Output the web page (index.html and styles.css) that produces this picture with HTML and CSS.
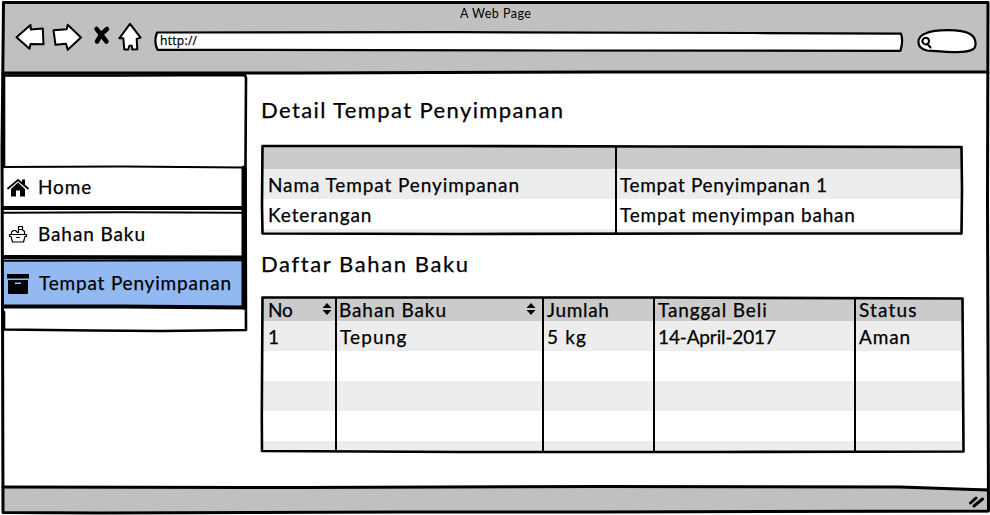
FILE: index.html
```html
<!DOCTYPE html>
<html lang="id">
<head>
<meta charset="utf-8">
<title>A Web Page</title>
<link rel="stylesheet" href="styles.css">
</head>
<body>
<div class="window">
  <header class="chrome">
    <div class="title">A Web Page</div>
    <div class="toolbar">
      <svg class="icon back" viewBox="0 0 28 26"><path d="M.5 13.3 14.500 .9l.3 4.500 12-.9.7 15.800-13-.3-1 4.800z"/></svg>
      <svg class="icon forward" viewBox="0 0 28 26"><path d="M.5 6.2 13.7 5.3 14.7.7 28 13.500 14.7 25.800 13 19.700 2.500 20.800z"/></svg>
      <svg class="icon stop" viewBox="0 0 17 20"><path d="M3.500 3 8 8.500 13.500 15.500M14 3 8.500 8 4 15.500"/></svg>
      <svg class="icon home" viewBox="0 0 22 27"><path d="M11 .8 21.600 14.600 17.700 15.900 18.300 26.200 13.300 26.500 12.800 22.800 10.400 22.800 9.300 26.500 5.300 26.500 4.300 15.300.3 15.300z"/></svg>
      <div class="address">
        <svg class="shape" viewBox="0 0 750 22"><path d="M3 2.500 300 2.200 600 3 747 3.700Q749.500 11 746.500 20.800L400 20.500 3.500 19.800Q-.5 12 3 2.500z"/></svg>
        <span>http://</span>
      </div>
      <div class="search">
        <svg class="shape" viewBox="0 0 60 26"><path d="M10 22.500C-1 20 -1.500 9 9 5.200 17 1.500 44 .5 53 6 59 9 60 18 56.500 21 48 26 30 24 10 22.500z"/><path class="glass" d="M11 10.500c-3.500-2-7 1-5 4.500 2 2.500 6 1.500 6-2 0-1-.4-1.800-1-2.500M10.500 16l3 3.500"/></svg>
      </div>
    </div>
  </header>

  <div class="body">
    <nav class="sidebar">
      <a class="item i1"><svg class="glyph" viewBox="0 0 22 20"><path d="M11 4.500 18 11V18.500H13V12.500H9V18.500H4V11z"/><path class="roof" d="M1 10.500 11 2 21 10.500"/><path d="M15 1.500H18V7L15 5z"/></svg><span>Home</span></a>
      <a class="item i2"><svg class="glyph" viewBox="0 0 22 20"><path class="line" d="M2.500 9.500H19.500V11.500H18L16.500 17H5.500L4 11.500H2.500zM9.500 12.500H12.500M4.500 9.200V7L6.500 5.500H8.500L10.500 7.500M11.500 7.500V1.500H15.500V5L17.500 6.500V9"/><path class="line" d="M11.500 4.500H15.500"/></svg><span>Bahan Baku</span></a>
      <a class="item i3"><svg class="glyph" viewBox="0 0 22 20"><path fill-rule="evenodd" d="M0 0H22V4.500H0zM1 6H21V19Q21 20 20 20H2Q1 20 1 19zM8 8.500V10H14V8.500z"/></svg><span>Tempat Penyimpanan</span></a>
      <svg class="overlay" viewBox="0 0 244 262"><path d="M2 3.500 120 3.500 243 3 244 6 243.500 90 244 258 160 259 90 258.500 2 257.500V240M2 3.500V95"/><path class="item-line" d="M1 95 120 94.500 241 95.500M1 140.800 120 140.300 241 140.800M1 188.800 240 188.300"/><path class="thick" d="M1 136 242 136M1 185 242 185.500M1 234.500 120 234.500 242 235.500"/><path class="edge" d="M242 96V235"/></svg>
    </nav>

    <main class="content">
      <h1>Detail Tempat Penyimpanan</h1>
      <div class="sheet detail">
        <table>
          <colgroup><col class="d1"><col class="d2"></colgroup>
          <tr class="head"><th></th><th></th></tr>
          <tr><td>Nama Tempat Penyimpanan</td><td class="tight">Tempat Penyimpanan 1</td></tr>
          <tr><td>Keterangan</td><td class="snug">Tempat menyimpan bahan</td></tr>
          <tr class="rest"><td></td><td></td></tr>
        </table>
        <svg class="overlay" viewBox="0 0 702 90"><path d="M1.500 1 200 1 400 1.500 700.500 2 701 45 700.500 88.500 450 88.500 200 89 1.500 88.500 1 60z"/></svg>
      </div>
      <h1 class="second">Daftar Bahan Baku</h1>
      <div class="sheet list">
        <table>
          <colgroup><col class="c1"><col class="c2"><col class="c3"><col class="c4"><col class="c5"></colgroup>
          <tr class="head"><th><div class="sort"><span class="flush">No</span><svg viewBox="0 0 10 12"><path d="M5 0 9.500 5H.5zM5 12 .5 7H9.500z"/></svg></div></th><th class="name"><div class="sort"><span>Bahan Baku</span><svg viewBox="0 0 10 12"><path d="M5 0 9.500 5H.5zM5 12 .5 7H9.500z"/></svg></div></th><th class="tight">Jumlah</th><th>Tanggal Beli</th><th class="wide">Status</th></tr>
          <tr><td>1</td><td class="wide">Tepung</td><td class="wide">5 kg</td><td class="flush">14-April-2017</td><td>Aman</td></tr>
          <tr><td></td><td></td><td></td><td></td><td></td></tr>
          <tr><td></td><td></td><td></td><td></td><td></td></tr>
          <tr><td></td><td></td><td></td><td></td><td></td></tr>
          <tr class="rest"><td></td><td></td><td></td><td></td><td></td></tr>
        </table>
        <svg class="overlay" viewBox="0 0 703 157"><path d="M1.500 1.500 200 1.500 400 1.500 701.500 2.500 702 80 702.500 155.500 450 156 200 156 1 155 .8 120z"/></svg>
      </div>
    </main>
  </div>

  <footer class="status"><svg viewBox="0 0 18 14"><path d="M2.500 9 8 4M6 12 14.500 5"/></svg></footer>
  <svg class="overlay frame" viewBox="0 0 990 515"><path d="M3.500 2.500H988L987.500 200 988.500 511 600 512 400 512 100 513 3 512.500 2.500 300 2 150z"/><path d="M3 73 300 73 600 72 988 72"/><path d="M3 487 300 487.500 600 486.500 900 487 988 490"/></svg>
</div>
</body>
</html>
```

FILE: styles.css
```css
* { box-sizing: border-box; }
body { margin: 0; background: #fff; color: #000; font-family: Lato, "Liberation Sans", sans-serif; font-size: 19px; letter-spacing: .9px; -webkit-text-stroke: .25px #000; }
.window { position: relative; width: 990px; height: 515px; padding: 1px 2px 2px; display: flex; flex-direction: column; overflow: hidden; }
svg path { stroke-linejoin: round; stroke-linecap: round; }
.overlay { position: absolute; left: 0; top: 0; width: 100%; height: 100%; pointer-events: none; fill: none; stroke: #000; stroke-width: 2.6; overflow: visible; }
.overlay .thick { stroke-width: 4; }
.overlay .edge { stroke-width: 5; }
.overlay .item-line { stroke-width: 2; }
.frame { stroke-width: 3; }

.chrome { height: 71px; background: #c0c0c0; flex: none; }
.title { height: 24px; padding-left: 458px; font-size: 12.5px; line-height: 25px; letter-spacing: .48px; -webkit-text-stroke-width: 0; }
.toolbar { display: flex; align-items: flex-start; padding-left: 14px; margin-top: -1px; }
.icon { fill: #fff; stroke: #000; stroke-width: 2; overflow: visible; flex: none; }
.back { width: 28px; height: 26px; margin-right: 9px; }
.forward { width: 28px; height: 26px; margin-right: 12px; }
.stop { width: 17px; height: 20px; margin: 2px 9px 0 0; stroke-width: 4.5; fill: none; }
.home { width: 22px; height: 27px; margin: -1px 13px 0 0; }
.address { position: relative; width: 750px; height: 22px; margin-top: 6px; padding-left: 6px; font: 12px/22px "Open Sans", sans-serif; letter-spacing: .3px; }
.address span { position: relative; }
.search { position: relative; width: 60px; height: 26px; margin: 4px 0 0 13px; }
.shape { position: absolute; left: 0; top: 0; width: 100%; height: 100%; fill: #fff; stroke: #000; stroke-width: 2.2; overflow: visible; }
.shape .glass { stroke-width: 2; fill: none; }

.body { flex: 1; display: flex; min-height: 0; }
.sidebar { position: relative; width: 244px; height: 262px; padding-top: 96px; display: flex; flex-direction: column; flex: none; }
.item { display: flex; align-items: center; gap: 9px; width: 241px; padding-left: 5px; flex: none; line-height: 24px; }
.item span { padding-bottom: 2px; }
.i1 { height: 40px; }
.i2 { height: 51px; padding-top: 3px; }
.i3 { height: 47px; padding-top: 3px; background: #92b9f2; gap: 10px; letter-spacing: .81px; }
.glyph { width: 22px; height: 20px; flex: none; }
.glyph .roof { fill: none; stroke: #000; stroke-width: 1.8; }
.glyph .line { fill: none; stroke: #000; stroke-width: 1.2; }

.content { padding: 23px 0 0 15px; }
h1 { margin: 0 0 21px; height: 29px; font-size: 22px; line-height: 29px; font-weight: 400; letter-spacing: 1.39px; white-space: nowrap; }
.second { margin: 14px 0 18px; letter-spacing: 1.6px; }
.sheet { position: relative; }
.detail { width: 702px; height: 90px; padding: 2px; }
.list { width: 703px; height: 157px; padding: 2px; }
table { border-collapse: separate; border-spacing: 0; table-layout: fixed; width: 699px; }
.d1 { width: 354px; } .d2 { width: 345px; }
.c1 { width: 74px; } .c2 { width: 207px; } .c3 { width: 111px; } .c4 { width: 201px; } .c5 { width: 106px; }
td, th { height: 30px; padding: 1px 0 0 3px; border-right: 2px solid #000; text-align: left; font-weight: 400; line-height: 24px; white-space: nowrap; overflow: hidden; }
td:first-child, th:first-child { padding-left: 5px; }
td:last-child, th:last-child { border-right: 0; }
tr:nth-child(even) { background: #ededed; }
.head { background: #cbcbcb; }
.detail .head th { height: 22px; }
.list .head th { height: 23px; line-height: 22px; padding-top: 0; }
.rest td { height: 4px; line-height: 0; padding: 0; }
.list .rest td { height: 10px; }
.sort { display: flex; justify-content: space-between; align-items: center; height: 23px; padding-right: 3px; }
.name .sort { padding-right: 6px; }
.name span { margin-left: -1px; }
.sort svg { width: 10px; height: 12px; margin-top: -2px; }
.tight { letter-spacing: .68px; }
.snug { letter-spacing: .78px; }
.wide { letter-spacing: 1.15px; }
.flush { letter-spacing: -.14px; }

.status { height: 25px; background: #c0c0c0; display: flex; justify-content: flex-end; padding: 6px 2px 0 0; flex: none; }
.status svg { width: 18px; height: 14px; fill: none; stroke: #000; stroke-width: 3; }
```
